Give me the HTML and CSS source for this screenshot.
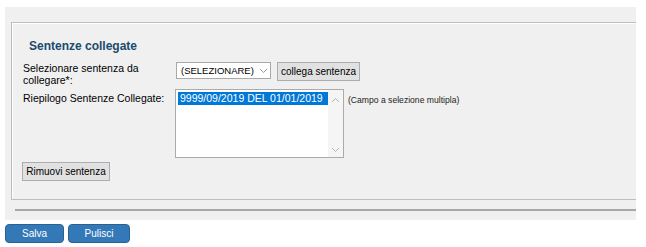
FILE: index.html
```html
<!DOCTYPE html>
<html lang="it">
<head>
  <meta charset="UTF-8">
  <title>Sentenze collegate</title>
  <link rel="stylesheet" href="styles.css">
</head>
<body>
  <div class="panel">
    <fieldset class="box">
      <h3>Sentenze collegate</h3>
      <div class="form">
        <label class="lbl">Selezionare sentenza da collegare*:</label>
        <div class="field">
          <div class="select">
            <span>(SELEZIONARE)</span>
            <svg width="9" height="6" viewBox="0 0 9 6"><path d="M1 1 L4.5 4.5 L8 1" fill="none" stroke="#9a9a9a" stroke-width="1"/></svg>
          </div>
          <button class="btn">collega sentenza</button>
        </div>

        <label class="lbl lbl-list">Riepilogo Sentenze Collegate:</label>
        <div class="field">
          <div class="listbox">
            <div class="options">
              <div class="opt selected">9999/09/2019 DEL 01/01/2019</div>
            </div>
            <div class="scroll">
              <svg width="9" height="6" viewBox="0 0 9 6"><path d="M1 5 L4.5 1.5 L8 5" fill="none" stroke="#b5b5b5" stroke-width="1"/></svg>
              <svg width="9" height="6" viewBox="0 0 9 6"><path d="M1 1 L4.5 4.5 L8 1" fill="none" stroke="#b5b5b5" stroke-width="1"/></svg>
            </div>
          </div>
          <span class="hint">(Campo a selezione multipla)</span>
        </div>
      </div>
      <button class="btn btn-remove">Rimuovi sentenza</button>
    </fieldset>
    <div class="rule"></div>
  </div>

  <div class="actions">
    <button class="btn-blue btn-salva">Salva</button>
    <button class="btn-blue btn-pulisci">Pulisci</button>
  </div>
</body>
</html>
```

FILE: styles.css
```css
body {
  margin: 0;
  font-family: 'Liberation Sans', Arial, sans-serif;
  color: #000;
  background: #fff;
}

.panel {
  margin: 7px 10px 0 5px;
  padding: 15px 0 9px 6px;
  background: #f0f0f0;
  overflow: hidden;
}

.box {
  margin: 0 -20px 0 0;
  padding: 16px 0 18px 11px;
  border: 1px solid #bdbdbd;
  box-shadow: inset 1px 1px 0 #fff;
}

h3 {
  margin: 0 0 8px 6px;
  font-size: 12px;
  line-height: 14px;
  font-weight: bold;
  color: #1a4a6e;
}

.form {
  display: grid;
  grid-template-columns: 152px auto;
  row-gap: 3px;
  align-items: start;
}

.lbl {
  font-size: 10.5px;
  line-height: 12px;
  padding-top: 1px;
  width: 125px;
}

.lbl-list {
  padding-top: 3px;
  width: auto;
}

.field {
  display: flex;
  align-items: flex-start;
}

.select {
  box-sizing: border-box;
  width: 95px;
  height: 17px;
  margin: 1px 6px 0 1px;
  padding: 0 2px 0 4px;
  display: flex;
  align-items: center;
  justify-content: space-between;
  background: #fff;
  border: 1px solid #a9a9a9;
  font-size: 9.5px;
}

.btn {
  box-sizing: border-box;
  height: 19px;
  margin-top: 1px;
  padding: 0 3px;
  background: #e1e1e1;
  border: 1px solid #adadad;
  font-family: 'Liberation Sans', Arial, sans-serif;
  font-size: 10px;
  color: #000;
}

.listbox {
  box-sizing: border-box;
  width: 169px;
  height: 69px;
  display: flex;
  background: #fff;
  border: 1px solid #ababab;
}

.options {
  flex: 1;
  padding: 2px 0 0 2px;
}

.opt {
  height: 13px;
  padding-left: 2px;
  font-size: 10.5px;
  line-height: 13px;
  white-space: nowrap;
}

.selected {
  background: #0078d7;
  color: #fff;
}

.scroll {
  width: 15px;
  display: flex;
  flex-direction: column;
  justify-content: space-between;
  align-items: center;
  padding: 7px 0 4px;
  background: #f5f5f5;
}

.hint {
  margin: 6px 0 0 4px;
  font-size: 8.6px;
  color: #222;
}

.btn-remove {
  display: block;
  width: 88px;
  margin: 4px 0 0 -1px;
}

.rule {
  margin: 9px 0 0 4px;
  border-top: 2px solid #a8a8a8;
}

.actions {
  display: flex;
  gap: 4px;
  padding: 4px 0 0 5px;
}

.btn-blue {
  box-sizing: border-box;
  height: 19px;
  background: #3479b7;
  border: 1px solid #2b628f;
  border-radius: 4px;
  color: #fff;
  font-family: 'Liberation Sans', Arial, sans-serif;
  font-size: 10px;
}

.btn-salva {
  width: 59px;
}

.btn-pulisci {
  width: 62px;
}
```
